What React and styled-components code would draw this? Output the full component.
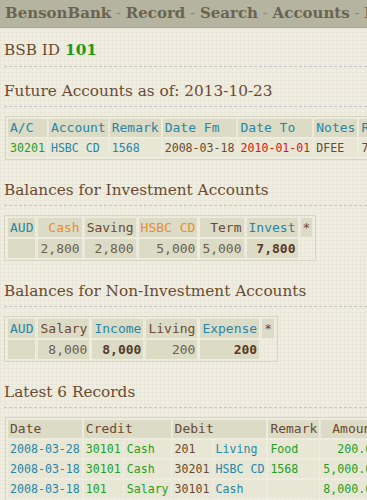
import React from "react";
import styled, { createGlobalStyle } from "styled-components";

const C = {
  brown: "#6b4a32",
  teal: "#2786a8",
  green: "#1fa01f",
  orange: "#e8902c",
  red: "#e01414",
  grey: "#6e5e50",
  dark: "#5a3826",
};

const GlobalStyle = createGlobalStyle`
  html, body { margin: 0; padding: 0; overflow: hidden; }
  body {
    background-color: #efede0;
    background-image:
      repeating-linear-gradient(0deg, rgba(120,110,80,0.035) 0 1px, transparent 1px 4px),
      repeating-linear-gradient(90deg, rgba(120,110,80,0.035) 0 1px, transparent 1px 4px);
    font-family: "DejaVu Serif", serif;
    color: ${C.brown};
  }
`;

const Nav = styled.nav`
  height: 28px;
  box-sizing: border-box;
  background: #b4b4a1;
  border-bottom: 1px solid #a9a996;
  padding: 0 5px;
  white-space: nowrap;
  overflow: hidden;
  font: bold 15px/27px "DejaVu Serif", serif;
  color: #6b6450;
`;

const NavLink = styled.a`
  color: #6b6450;
  text-decoration: none;
`;

const NavSep = styled.span`
  font-weight: normal;
  color: #8c8774;
`;

const Main = styled.main`
  padding: 0 0 0 4px;
`;

const Title = styled.div`
  font-size: 15.3px;
  line-height: 20px;
  margin-top: 12px;
  padding-bottom: 6px;
  border-bottom: 1px dashed #c6c6cc;
`;

const Id = styled.b`
  color: #1b9a1b;
`;

const Heading = styled.h2`
  font-size: 15.3px;
  font-weight: normal;
  line-height: 20px;
  margin: 14px 0 0;
  padding-bottom: 5px;
  border-bottom: 1px dashed #c6c6cc;
  color: ${C.brown};
  white-space: nowrap;
`;

const Table = styled.table`
  border-collapse: separate;
  border-spacing: ${(p) => (p.$tall ? "3px 2px" : "2px")};
  border: 1px solid #d7d6c3;
  margin: 9px 0 20px ${(p) => (p.$tall ? "0" : "1px")};
  font-family: "DejaVu Sans Mono", monospace;
  font-size: 13px;
  line-height: ${(p) => (p.$tall ? "19px" : "18px")};
  white-space: nowrap;
`;

const Th = styled.th`
  background: #dcdbc6;
  font-weight: normal;
  padding: 0 2px;
  text-align: ${(p) => (p.$right ? "right" : "left")};
  color: ${(p) => C[p.$c || "brown"]};
`;

const Td = styled.td`
  background: ${(p) => (p.$light ? "#e8e7d5" : "#dcdbc6")};
  padding: 0 2px;
  font-size: ${(p) => (p.$small ? "11.6px" : "13px")};
  font-weight: ${(p) => (p.$bold ? "bold" : "normal")};
  text-align: ${(p) => (p.$right ? "right" : "left")};
  color: ${(p) => C[p.$c || "grey"]};
`;

const navItems = ["BensonBank", "Record", "Search", "Accounts", "Reports"];

const records = [
  ["2008-03-28", "30101", "Cash", "201", "Living", "Food", "200.00"],
  ["2008-03-18", "30101", "Cash", "30201", "HSBC CD", "1568", "5,000.00"],
  ["2008-03-18", "101", "Salary", "30101", "Cash", "", "8,000.00"],
  ["2008-03-10", "30101", "Cash", "201", "Living", "Rent", "600.00"],
  ["2008-03-05", "101", "Salary", "30101", "Cash", "", "2,800.00"],
  ["2008-03-01", "30101", "Cash", "202", "Saving", "", "2,800.00"],
];

export default function App() {
  return (
    <>
      <GlobalStyle />
      <Nav>
        {navItems.map((n, i) => (
          <React.Fragment key={n}>
            {i > 0 && <NavSep> - </NavSep>}
            <NavLink href="#">{n}</NavLink>
          </React.Fragment>
        ))}
      </Nav>
      <Main>
        <Title>
          BSB ID <Id>101</Id>
        </Title>

        <Heading>Future Accounts as of: 2013-10-23</Heading>
        <Table>
          <thead>
            <tr>
              <Th $c="teal">A/C</Th>
              <Th $c="teal">Account</Th>
              <Th $c="teal">Remark</Th>
              <Th $c="teal">Date Fm</Th>
              <Th $c="teal">Date To</Th>
              <Th $c="teal">Notes</Th>
              <Th $c="teal">Rate</Th>
            </tr>
          </thead>
          <tbody>
            <tr>
              <Td $light $small $c="green">30201</Td>
              <Td $light $small $c="teal">HSBC CD</Td>
              <Td $light $small $c="teal">1568</Td>
              <Td $light $small $c="brown">2008-03-18</Td>
              <Td $light $small $c="red">2010-01-01</Td>
              <Td $light $small $c="brown">DFEE</Td>
              <Td $light $small $c="brown">7.25</Td>
            </tr>
          </tbody>
        </Table>

        <Heading>Balances for Investment Accounts</Heading>
        <Table $tall>
          <thead>
            <tr>
              <Th $c="teal">AUD</Th>
              <Th $c="orange" $right>Cash</Th>
              <Th>Saving</Th>
              <Th $c="orange">HSBC CD</Th>
              <Th $right>Term</Th>
              <Th $c="teal">Invest</Th>
              <Th>*</Th>
            </tr>
          </thead>
          <tbody>
            <tr>
              <Td></Td>
              <Td $right>2,800</Td>
              <Td $right>2,800</Td>
              <Td $right>5,000</Td>
              <Td $right>5,000</Td>
              <Td $right $bold $c="dark">7,800</Td>
            </tr>
          </tbody>
        </Table>

        <Heading>Balances for Non-Investment Accounts</Heading>
        <Table $tall>
          <thead>
            <tr>
              <Th $c="teal">AUD</Th>
              <Th>Salary</Th>
              <Th $c="teal">Income</Th>
              <Th>Living</Th>
              <Th $c="teal">Expense</Th>
              <Th>*</Th>
            </tr>
          </thead>
          <tbody>
            <tr>
              <Td></Td>
              <Td $right>8,000</Td>
              <Td $right $bold $c="dark">8,000</Td>
              <Td $right>200</Td>
              <Td $right $bold $c="dark">200</Td>
            </tr>
          </tbody>
        </Table>

        <Heading>Latest 6 Records</Heading>
        <Table>
          <thead>
            <tr>
              <Th>Date</Th>
              <Th colSpan={2}>Credit</Th>
              <Th colSpan={2}>Debit</Th>
              <Th>Remark</Th>
              <Th $right>Amount</Th>
              <Th>Note</Th>
            </tr>
          </thead>
          <tbody>
            {records.map((r, i) => (
              <tr key={i}>
                <Td $light $small $c="teal">{r[0]}</Td>
                <Td $light $small $c="green">{r[1]}</Td>
                <Td $light $small $c="green">{r[2]}</Td>
                <Td $light $small $c="brown">{r[3]}</Td>
                <Td $light $small $c="teal">{r[4]}</Td>
                <Td $light $small $c="green">{r[5]}</Td>
                <Td $light $small $right $c="green">{r[6]}</Td>
                <Td $light $small $c="brown"></Td>
              </tr>
            ))}
          </tbody>
        </Table>
      </Main>
    </>
  );
}
